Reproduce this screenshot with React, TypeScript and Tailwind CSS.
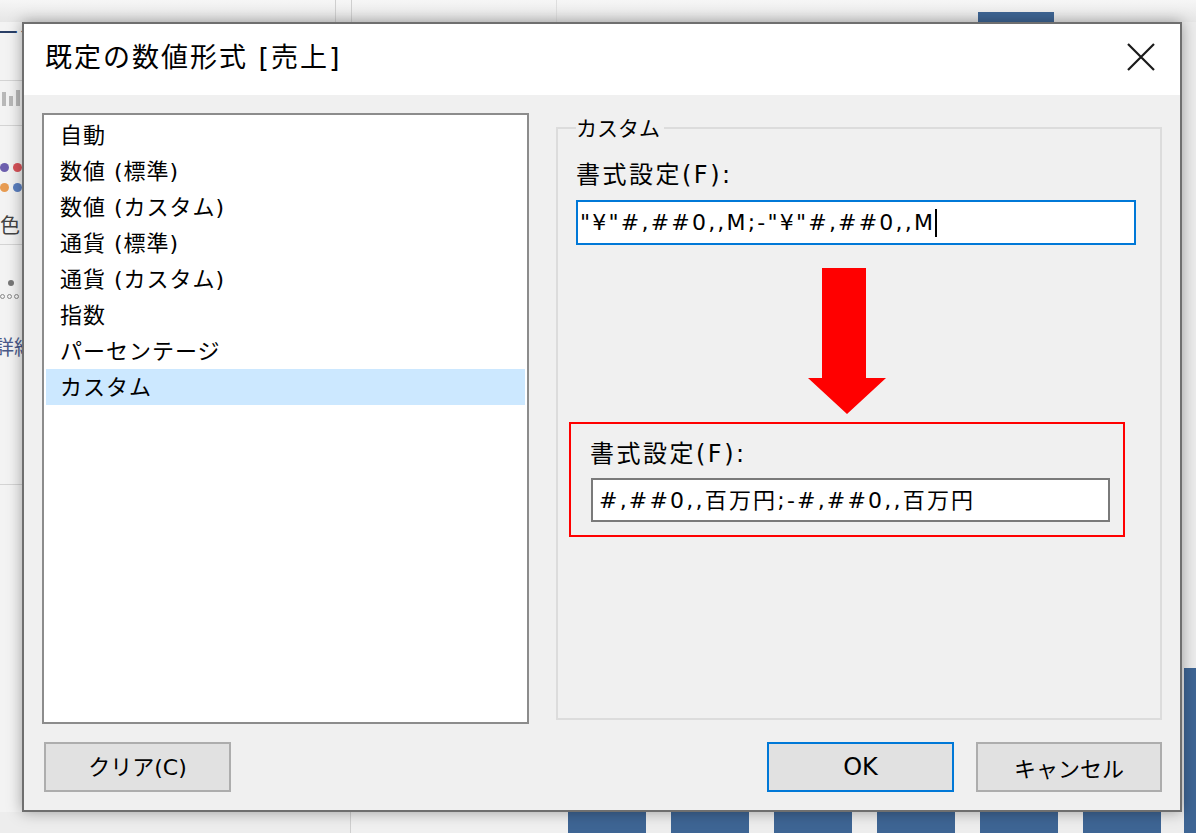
import React from "react";

const F = { fontFamily: '"DejaVu Sans", "Noto Sans CJK JP", sans-serif' };
const J = { fontFamily: '"Noto Sans CJK JP", "DejaVu Sans", sans-serif' };

const items = [
  "自動",
  "数値 (標準)",
  "数値 (カスタム)",
  "通貨 (標準)",
  "通貨 (カスタム)",
  "指数",
  "パーセンテージ",
  "カスタム",
];

function TopStrip() {
  return (
    <div className="h-[22px] flex items-end bg-gradient-to-b from-[#f6f6f6] to-[#e6e6e6]">
      <div className="w-[335px]" />
      <div className="w-[1px] h-full bg-[#cfcfcf]" />
      <div className="w-[15px]" />
      <div className="w-[1px] h-full bg-[#cfcfcf]" />
      <div className="w-[204px]" />
      <div className="w-[1px] h-full bg-[#dedede]" />
      <div className="w-[421px]" />
      <div className="w-[76px] h-[10px] bg-[#3e6594]" />
    </div>
  );
}

function LeftStrip() {
  return (
    <div className="w-[22px] bg-[#f3f3f3] flex flex-col overflow-hidden">
      <div className="-mt-[6px] -ml-[3px] h-[28px] text-[22px] leading-[28px] text-[#2a3f66] whitespace-nowrap" style={J}>
        ーク
      </div>
      <div className="mt-[36px] h-[1px] bg-[#d4d4d4]" />
      <div className="mt-[9px] h-[16px] flex items-end gap-[3px] px-[2px]">
        <div className="w-[4px] h-[14px] bg-[#b8b8b8]" />
        <div className="w-[4px] h-[10px] bg-[#b8b8b8]" />
        <div className="w-[4px] h-[16px] bg-[#b8b8b8]" />
      </div>
      <div className="mt-[19px] h-[1px] bg-[#d4d4d4]" />
      <div className="mt-[37px] grid grid-cols-2 gap-x-[4px] gap-y-[11px] w-[22px]">
        <div className="w-[9px] h-[9px] rounded-full bg-[#6d5fae]" />
        <div className="w-[9px] h-[9px] rounded-full bg-[#d9535a]" />
        <div className="w-[9px] h-[9px] rounded-full bg-[#e79b52]" />
        <div className="w-[9px] h-[9px] rounded-full bg-[#5b7fc0]" />
      </div>
      <div className="mt-[20px] h-[26px] text-[20px] leading-[26px] text-[#444]" style={J}>色</div>
      <div className="mt-[6px] h-[1px] bg-[#d4d4d4]" />
      <div className="mt-[35px] ml-[8px] w-[6px] h-[6px] rounded-full bg-[#777]" />
      <div className="mt-[8px] flex gap-[2px]">
        <div className="w-[5px] h-[5px] rounded-full border border-[#888]" />
        <div className="w-[5px] h-[5px] rounded-full border border-[#888]" />
        <div className="w-[5px] h-[5px] rounded-full border border-[#888]" />
      </div>
      <div className="mt-[34px] -ml-[6px] h-[28px] text-[20px] leading-[28px] text-[#4a5a8a] whitespace-nowrap" style={J}>
        詳細
      </div>
      <div className="mt-[123px] h-[1px] bg-[#d4d4d4]" />
    </div>
  );
}

function RightStrip() {
  return (
    <div className="flex-1 bg-[#ececec] flex flex-col">
      <div className="flex-1" />
      <div className="ml-[2px] h-[144px] bg-[#3e6594]" />
    </div>
  );
}

function BottomStrip() {
  return (
    <div className="h-[21px] flex bg-[#ededed]">
      <div className="w-[350px]" />
      <div className="w-[1px] bg-[#cfcfcf]" />
      <div className="w-[217px] bg-[#f0f0f0]" />
      <div className="flex gap-[25px]">
        {[0, 1, 2, 3, 4, 5].map((i) => (
          <div key={i} className="w-[78px] bg-[#3e6594]" />
        ))}
      </div>
      <div className="flex-1" />
      <div className="w-[12px] bg-[#3e6594]" />
    </div>
  );
}

function Arrow() {
  return (
    <svg width="78" height="146" viewBox="0 0 78 146" className="block">
      <path d="M14 0 H58 V110 H78 L39 146 L0 110 H14 Z" fill="#ff0000" />
    </svg>
  );
}

function Dialog() {
  return (
    <div className="relative z-10 w-[1160px] h-[790px] border-2 border-[#6f6f6f] bg-[#f0f0f0] flex flex-col shadow-[0_0_14px_rgba(0,0,0,0.35)]">
      {/* title bar */}
      <div className="h-[71px] shrink-0 bg-white flex items-center justify-between pl-[21px] pr-[24px]">
        <div className="text-[27px] leading-[36px] text-black tracking-[2px] -mt-[4px]" style={F}>
          既定の数値形式 [売上]
        </div>
        <svg width="30" height="30" viewBox="0 0 30 30" className="-mt-[6px]">
          <path d="M2 2 L28 28 M28 2 L2 28" stroke="#1a1a1a" strokeWidth="2.2" />
        </svg>
      </div>
      {/* body */}
      <div className="flex-1 flex flex-col p-[18px] gap-[18px]">
        <div className="flex h-[611px]">
          {/* list */}
          <div className="w-[487px] h-full border-2 border-[#8c8c8c] bg-white p-[2px]">
            {items.map((t, i) => (
              <div
                key={t}
                className={
                  "h-[36px] flex items-center pl-[14px] text-[22px] tracking-[1px] text-black " +
                  (i === 7 ? "bg-[#cce8ff]" : "")
                }
                style={F}
              >
                {t}
              </div>
            ))}
          </div>
          {/* group box */}
          <div className="relative ml-[27px] mt-[14px] mb-[4px] flex-1 border-2 border-[#dcdcdc]">
            <div className="absolute left-[18px] -top-[17px] bg-[#f0f0f0] pr-[4px] text-[21px] leading-[30px] text-black" style={J}>
              カスタム
            </div>
            <div className="flex flex-col pt-[31px]">
              <div className="pl-[18px] text-[24px] leading-[30px] tracking-[2.5px] text-black" style={F}>
                書式設定(F):
              </div>
              <div className="ml-[18px] mt-[10px] w-[560px] h-[45px] border-2 border-[#0078d7] bg-white flex items-center pl-[2px] text-[22px] tracking-[2.2px] text-black" style={F}>
                <span>"¥"#,##0,,M;-"¥"#,##0,,M</span>
                <span className="w-[2px] h-[28px] bg-black" />
              </div>
              <div className="ml-[250px] mt-[23px]">
                <Arrow />
              </div>
              <div className="ml-[11px] mt-[8px] w-[556px] h-[115px] border-2 border-[#ff0000] flex flex-col">
                <div className="pl-[19px] pt-[15px] text-[24px] leading-[30px] tracking-[2.5px] text-black" style={F}>
                  書式設定(F):
                </div>
                <div className="ml-[20px] mt-[9px] w-[519px] h-[44px] border-2 border-[#7a7a7a] bg-white flex items-center pl-[6px] text-[22px] tracking-[2.2px] text-black" style={F}>
                  #,##0,,百万円;-#,##0,,百万円
                </div>
              </div>
            </div>
          </div>
        </div>
        {/* buttons */}
        <div className="flex h-[50px] items-stretch">
          <div className="ml-[2px] w-[187px] border-2 border-[#adadad] bg-[#e1e1e1] flex items-center justify-center text-[22px] text-black" style={F}>
            クリア(C)
          </div>
          <div className="flex-1" />
          <div className="w-[187px] border-2 border-[#0078d7] bg-[#e1e1e1] flex items-center justify-center text-[24px] text-black" style={F}>
            OK
          </div>
          <div className="ml-[22px] w-[186px] border-2 border-[#adadad] bg-[#e1e1e1] flex items-center justify-center text-[22px] text-black" style={J}>
            キャンセル
          </div>
        </div>
      </div>
    </div>
  );
}

export default function App() {
  return (
    <div className="w-[1196px] h-[833px] overflow-hidden bg-[#f0f0f0] flex flex-col">
      <TopStrip />
      <div className="flex h-[790px]">
        <LeftStrip />
        <Dialog />
        <RightStrip />
      </div>
      <BottomStrip />
    </div>
  );
}
